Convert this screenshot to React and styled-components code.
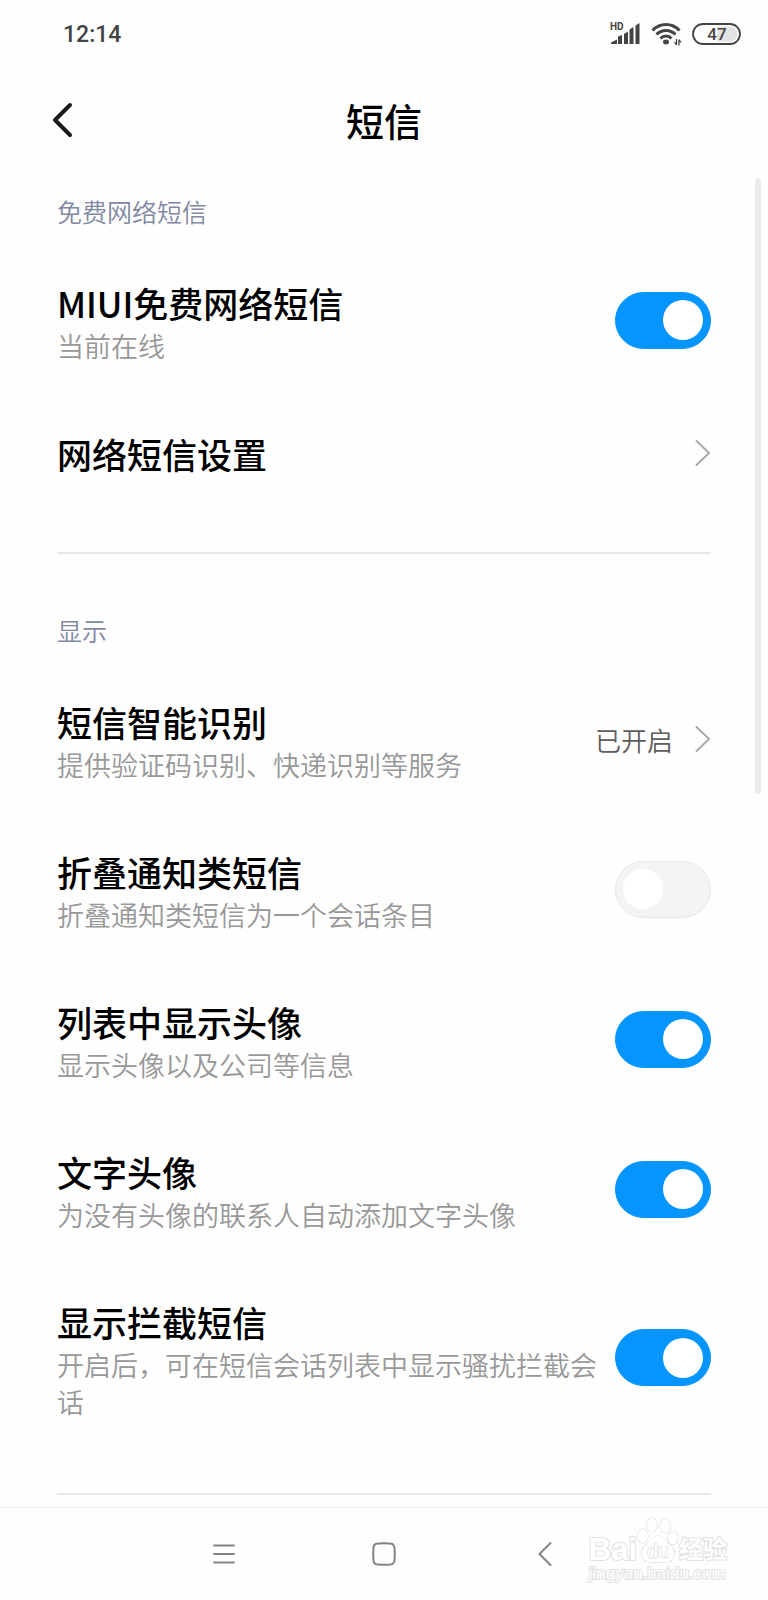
import React, { useState } from "react";
import styled, { createGlobalStyle } from "styled-components";

const sections = [
  {
    id: "network",
    title: "免费网络短信",
    items: [
      {
        id: "miui",
        type: "switch",
        title: "MIUI免费网络短信",
        note: "当前在线",
      },
      { id: "network-settings", type: "link", title: "网络短信设置" },
    ],
  },
  {
    id: "display",
    title: "显示",
    items: [
      {
        id: "smart",
        type: "link",
        title: "短信智能识别",
        note: "提供验证码识别、快递识别等服务",
        value: "已开启",
      },
      {
        id: "fold",
        type: "switch",
        title: "折叠通知类短信",
        note: "折叠通知类短信为一个会话条目",
      },
      {
        id: "avatar",
        type: "switch",
        title: "列表中显示头像",
        note: "显示头像以及公司等信息",
      },
      {
        id: "text-avatar",
        type: "switch",
        title: "文字头像",
        note: "为没有头像的联系人自动添加文字头像",
      },
      {
        id: "blocked",
        type: "switch",
        title: "显示拦截短信",
        note: "开启后，可在短信会话列表中显示骚扰拦截会话",
      },
    ],
  },
];

const SignalIcon = () => (
  <svg width="32" height="28" viewBox="0 -2 32 28" aria-hidden="true">
    <text x="0" y="8" fontSize="10" fontWeight="700" fill="#444">
      HD
    </text>
    <g fill="#444">
      <path d="M1 22 V20.500 L7 17.500 V22 Z" />
      <path d="M8 22 V14.500 L12 13 V22 Z" />
      <path d="M14 22 V12 L18 9.500 V22 Z" />
      <path d="M19.500 22 V7.500 L23.500 5 V22 Z" />
      <path d="M25.500 22 V3.500 L29.500 1 V22 Z" />
    </g>
  </svg>
);

const WifiIcon = () => (
  <svg width="32" height="24" viewBox="0 0 32 24" aria-hidden="true">
    <g fill="none" stroke="#444" strokeWidth="3">
      <path d="M1.500 8.500 C9 0.500 21 0.500 28.500 8.500" />
      <path d="M5.500 12.500 C10.500 7 19.500 7 24.500 12.500" />
      <path d="M9.500 16.500 C12.500 13.200 17.500 13.200 20.500 16.500" />
    </g>
    <ellipse cx="15" cy="20" rx="3" ry="2.400" fill="#444" />
    <path
      d="M25.500 17 V23 M25.500 23 L23.500 20 M28 23.500 V17.500 M28 17.500 L30 20.500"
      fill="none"
      stroke="#444"
      strokeWidth="1.300"
    />
  </svg>
);

const BatteryIcon = () => (
  <svg width="50" height="24" viewBox="0 0 50 24" role="img" aria-label="47%">
    <path d="M25 4.500 H38 A7.500 7.500 0 0 1 38 19.500 H25 Z" fill="#e4e4e4" />
    <rect
      x="1"
      y="2"
      width="47"
      height="20"
      rx="10"
      fill="none"
      stroke="#444"
      strokeWidth="1.800"
    />
    <text
      x="25"
      y="18"
      fontSize="17"
      fontWeight="500"
      textAnchor="middle"
      fill="#444"
    >
      47
    </text>
  </svg>
);

const Chevron = () => (
  <svg width="16" height="28" viewBox="0 0 16 28" aria-hidden="true">
    <path
      d="M1 1.500 L14 14 L1 26.500"
      fill="none"
      stroke="#aaa"
      strokeWidth="2"
    />
  </svg>
);

const Paw = () => (
  <svg width="42" height="48" viewBox="0 0 42 48" aria-hidden="true">
    <g fill="#fff" stroke="#d8d8d8" strokeWidth="1.200">
      <ellipse cx="6" cy="20" rx="5" ry="7" />
      <ellipse cx="15" cy="9" rx="5" ry="7" />
      <ellipse cx="28" cy="10" rx="5" ry="7" />
      <ellipse cx="36" cy="22" rx="5" ry="6.500" />
      <path d="M21 20 C15 20 13 26 8 30 C3 34 3 45 12 46 C17 46.500 25 46.500 30 46 C39 45 39 34 34 30 C29 26 27 20 21 20 Z" />
    </g>
    <text
      x="21"
      y="42"
      fontSize="20"
      fontWeight="400"
      textAnchor="middle"
      fill="#fff"
      stroke="#d0d0d0"
      strokeWidth="1"
    >
      du
    </text>
  </svg>
);

function SettingRow({ item, checked, onToggle }) {
  const text = (
    <RowText>
      <RowTitle>{item.title}</RowTitle>
      {item.note && <RowNote>{item.note}</RowNote>}
    </RowText>
  );

  if (item.type === "link") {
    return (
      <Row as="a" href={`#${item.id}`}>
        {text}
        {item.value && <RowValue>{item.value}</RowValue>}
        <Chevron />
      </Row>
    );
  }

  return (
    <Row htmlFor={item.id}>
      {text}
      <Switch
        id={item.id}
        type="checkbox"
        role="switch"
        checked={checked}
        onChange={() => onToggle(item.id)}
      />
    </Row>
  );
}

export default function App() {
  const [enabled, setEnabled] = useState({
    miui: true,
    fold: false,
    avatar: true,
    "text-avatar": true,
    blocked: true,
  });

  const handleToggle = (id) => {
    setEnabled((prev) => ({ ...prev, [id]: !prev[id] }));
  };

  return (
    <Page>
      <GlobalStyle />
      <StatusBar>
        <Time>12:14</Time>
        <StatusIcons>
          <SignalIcon />
          <WifiIcon />
          <BatteryIcon />
        </StatusIcons>
      </StatusBar>
      <Header>
        <BackButton type="button" aria-label="返回">
          <svg width="22" height="36" viewBox="0 0 22 36" aria-hidden="true">
            <path
              d="M19 3 L4 18 L19 33"
              fill="none"
              stroke="#1a1a1a"
              strokeWidth="4"
              strokeLinecap="round"
              strokeLinejoin="round"
            />
          </svg>
        </BackButton>
        <PageTitle>短信</PageTitle>
      </Header>
      <Content>
        {sections.map((section) => (
          <Section key={section.id}>
            <SectionTitle>{section.title}</SectionTitle>
            {section.items.map((item) => (
              <SettingRow
                key={item.id}
                item={item}
                checked={enabled[item.id]}
                onToggle={handleToggle}
              />
            ))}
          </Section>
        ))}
        <ScrollThumb />
      </Content>
      <NavBar>
        <NavButton type="button" aria-label="菜单">
          <svg width="24" height="24" viewBox="0 0 24 24" aria-hidden="true">
            <path d="M3 3.500 H23 M3 12 H23 M3 20.500 H23" />
          </svg>
        </NavButton>
        <NavButton type="button" aria-label="主页">
          <svg width="24" height="24" viewBox="0 0 24 24" aria-hidden="true">
            <path d="M6 1.500 Q12 1 18 1.500 Q22 1.500 22.500 6 Q23 12 22.500 18 Q22.500 22 18 22.500 Q12 23 6 22.500 Q1.500 22.500 1.500 18 Q1 12 1.500 6 Q1.500 1.500 6 1.500 Z" />
          </svg>
        </NavButton>
        <NavButton type="button" aria-label="后退">
          <svg width="14" height="24" viewBox="0 0 14 24" aria-hidden="true">
            <path d="M12.500 1 L1.500 12 L12.500 23" />
          </svg>
        </NavButton>
        <Watermark>
          <WatermarkLogo>
            <span>Bai</span>
            <Paw />
            <WatermarkWord>经验</WatermarkWord>
          </WatermarkLogo>
          <WatermarkSite>jingyan.baidu.com</WatermarkSite>
        </Watermark>
      </NavBar>
    </Page>
  );
}

const GlobalStyle = createGlobalStyle`
  * {
    box-sizing: border-box;
  }

  body {
    margin: 0;
    background: #fefefe;
    font-family: "Noto Sans CJK SC", sans-serif;
  }

  button {
    border: none;
    background: none;
    padding: 0;
    cursor: pointer;
  }
`;

const Page = styled.div`
  display: flex;
  flex-direction: column;
  min-height: 100vh;
`;

const StatusBar = styled.div`
  display: flex;
  align-items: center;
  justify-content: space-between;
  height: 68px;
  padding: 0 26px 0 63px;
  color: #444;
  font-family: Roboto, sans-serif;
`;

const Time = styled.span`
  font-size: 23px;
  font-weight: 500;
`;

const StatusIcons = styled.div`
  display: flex;
  align-items: center;
  gap: 9px;
`;

const Header = styled.header`
  display: grid;
  grid-template-columns: 1fr auto 1fr;
  align-items: center;
  height: 104px;
  padding: 0 51px;
`;

const BackButton = styled.button`
  display: flex;
  justify-self: start;
`;

const PageTitle = styled.h1`
  margin: 0;
  font-size: 38px;
  font-weight: 500;
  line-height: 56px;
  color: #000;
`;

const Content = styled.main`
  position: relative;
  padding: 21px 57px 12px;
`;

const Section = styled.section`
  padding-bottom: 42px;
  border-bottom: 2px solid #e6e6e6;

  & + & {
    padding-top: 58px;
  }
`;

const SectionTitle = styled.h2`
  margin: 0 0 16px;
  font-size: 25px;
  font-weight: 350;
  line-height: 36px;
  color: #8088a2;
`;

const Row = styled.label`
  display: flex;
  align-items: center;
  gap: 16px;
  min-height: 115px;
  padding: 31px 0;
  color: inherit;
  text-decoration: none;
  cursor: pointer;
`;

const RowText = styled.span`
  flex: 1;
  min-width: 0;
  padding-top: 3px;
`;

const RowTitle = styled.span`
  display: block;
  font-size: 35px;
  font-weight: 500;
  line-height: 48px;
  color: #000;
`;

const RowNote = styled.span`
  display: block;
  font-size: 27px;
  font-weight: 350;
  line-height: 37px;
  color: #989898;
`;

const RowValue = styled.span`
  margin-right: 6px;
  font-size: 26px;
  font-weight: 350;
  line-height: 37px;
  color: #5c5c5c;
`;

const Switch = styled.input`
  appearance: none;
  flex: none;
  display: flex;
  align-items: center;
  justify-content: flex-start;
  width: 96px;
  height: 57px;
  margin: 0;
  padding: 0 7px;
  border: 1px solid #e8e8e8;
  border-radius: 29px;
  background: #f4f4f4;
  cursor: pointer;

  &::before {
    content: "";
    width: 40px;
    height: 40px;
    border-radius: 50%;
    background: #fff;
  }

  &:checked {
    justify-content: flex-end;
    border-color: #0495ff;
    background: #0495ff;
  }
`;

const ScrollThumb = styled.div`
  position: absolute;
  top: 6px;
  right: 7px;
  width: 6px;
  height: 616px;
  border-radius: 3px;
  background: #ebebeb;
`;

const NavBar = styled.nav`
  position: relative;
  display: flex;
  justify-content: center;
  height: 93px;
  margin-top: auto;
  border-top: 1px solid #ececec;
`;

const NavButton = styled.button`
  display: flex;
  align-items: center;
  justify-content: center;
  width: 21%;

  svg {
    fill: none;
    stroke: #858585;
    stroke-width: 2;
    stroke-linecap: round;
  }
`;

const Watermark = styled.div`
  position: absolute;
  right: 41px;
  bottom: 16px;
  font-family: "Liberation Sans", "Noto Sans CJK SC", sans-serif;
  color: #fff;
  -webkit-text-stroke: 2px #e2e2e2;
  paint-order: stroke fill;
  pointer-events: none;
`;

const WatermarkLogo = styled.div`
  display: flex;
  align-items: flex-end;
  font-size: 31px;
  font-weight: 700;
  line-height: 29px;
`;

const WatermarkWord = styled.span`
  font-size: 24px;
`;

const WatermarkSite = styled.div`
  font-size: 17px;
  line-height: 20px;
`;
